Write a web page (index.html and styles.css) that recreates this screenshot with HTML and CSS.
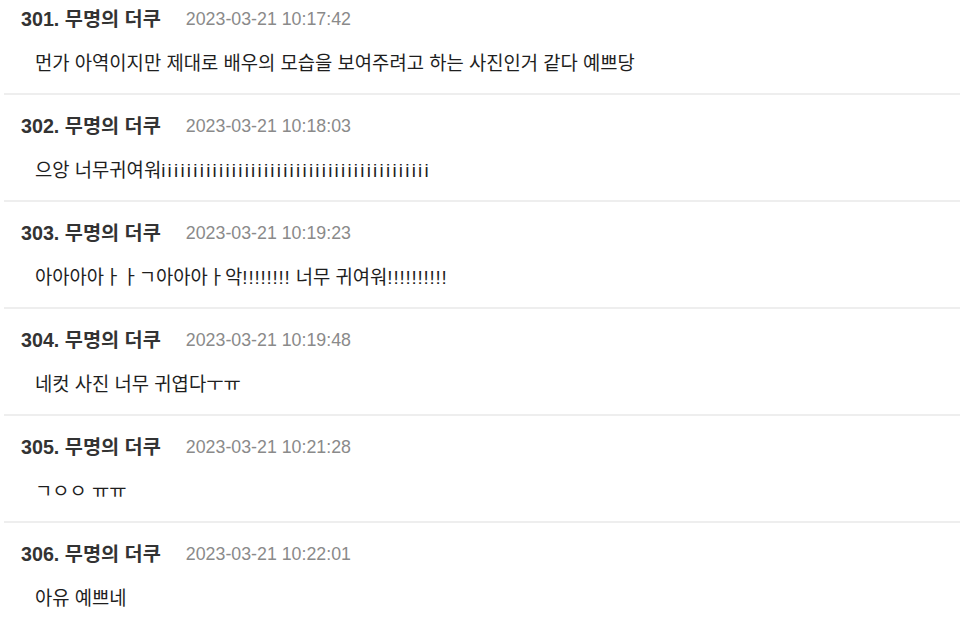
FILE: index.html
```html
<!DOCTYPE html>
<html lang="ko">
<head>
<meta charset="utf-8">
<link rel="stylesheet" href="styles.css">
</head>
<body>
<ul class="comments">
  <li class="comment">
    <div class="meta"><span class="name">301. 무명의 더쿠</span><span class="date">2023-03-21 10:17:42</span></div>
    <p class="text">먼가 아역이지만 제대로 배우의 모습을 보여주려고 하는 사진인거 같다 예쁘당</p>
  </li>
  <li class="comment">
    <div class="meta"><span class="name">302. 무명의 더쿠</span><span class="date">2023-03-21 10:18:03</span></div>
    <p class="text">으앙 너무귀여워<span class="ii">iiiiiiiiiiiiiiiiiiiiiiiiiiiiiiiiiiiiiiiiii</span></p>
  </li>
  <li class="comment">
    <div class="meta"><span class="name">303. 무명의 더쿠</span><span class="date">2023-03-21 10:19:23</span></div>
    <p class="text">아아아아ㅏㅏㄱ아아아ㅏ악<span class="ex">!!!!!!!!</span> 너무 귀여워<span class="ex">!!!!!!!!!!</span></p>
  </li>
  <li class="comment">
    <div class="meta"><span class="name">304. 무명의 더쿠</span><span class="date">2023-03-21 10:19:48</span></div>
    <p class="text">네컷 사진 너무 귀엽다ㅜㅠ</p>
  </li>
  <li class="comment">
    <div class="meta"><span class="name">305. 무명의 더쿠</span><span class="date">2023-03-21 10:21:28</span></div>
    <p class="text">ㄱㅇㅇ ㅠㅠ</p>
  </li>
  <li class="comment">
    <div class="meta"><span class="name">306. 무명의 더쿠</span><span class="date">2023-03-21 10:22:01</span></div>
    <p class="text">아유 예쁘네</p>
  </li>
</ul>
</body>
</html>
```
FILE: styles.css
```css
html, body {
  margin: 0;
  padding: 0;
  background: #ffffff;
}
body {
  font-family: "Liberation Sans", "Noto Sans CJK KR", sans-serif;
  color: #222222;
  overflow: hidden;
}
.comments {
  list-style: none;
  margin: -12px 0 0 4px;
  padding: 0;
}
.comment {
  height: 105px;
  border-bottom: 2px solid #eeeeee;
  padding: 0 0 0 17px;
  box-sizing: content-box;
  display: flex;
  flex-direction: column;
}
.meta {
  margin-top: 20px;
  height: 22px;
  display: flex;
  align-items: center;
  gap: 25px;
  line-height: 22px;
}
.name {
  font-weight: bold;
  font-size: 19.7px;
  color: #333333;
}
.date {
  font-size: 17.8px;
  color: #8a8a8a;
}
.text {
  margin: 22px 0 0 14px;
  font-size: 18.8px;
  line-height: 24px;
  color: #1e1e1e;
}
.ii {
  letter-spacing: 2.25px;
}
.ex {
  letter-spacing: 0.8px;
}
```
